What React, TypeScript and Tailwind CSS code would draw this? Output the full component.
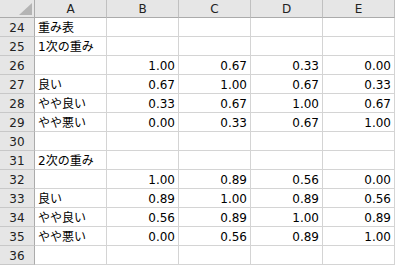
import React from "react";

const rows: { n: number; a: string; v: string[] }[] = [
  { n: 24, a: "重み表", v: [] },
  { n: 25, a: "1次の重み", v: [] },
  { n: 26, a: "", v: ["1.00", "0.67", "0.33", "0.00"] },
  { n: 27, a: "良い", v: ["0.67", "1.00", "0.67", "0.33"] },
  { n: 28, a: "やや良い", v: ["0.33", "0.67", "1.00", "0.67"] },
  { n: 29, a: "やや悪い", v: ["0.00", "0.33", "0.67", "1.00"] },
  { n: 30, a: "", v: [] },
  { n: 31, a: "2次の重み", v: [] },
  { n: 32, a: "", v: ["1.00", "0.89", "0.56", "0.00"] },
  { n: 33, a: "良い", v: ["0.89", "1.00", "0.89", "0.56"] },
  { n: 34, a: "やや良い", v: ["0.56", "0.89", "1.00", "0.89"] },
  { n: 35, a: "やや悪い", v: ["0.00", "0.56", "0.89", "1.00"] },
  { n: 36, a: "", v: [] },
];

const cols = ["A", "B", "C", "D", "E"];

export default function App() {
  return (
    <div
      className="w-[395px] h-[265px] overflow-hidden bg-white text-black"
      style={{ fontFamily: '"DejaVu Sans", "Noto Sans CJK JP", sans-serif' }}
    >
      <div className="grid grid-cols-[35px_repeat(5,72px)]">
        <div className="h-[18px] bg-[#e6e6e6] border-r border-b border-[#ababab] flex items-end justify-end pr-[2px] pb-[2px]">
          <svg width="13" height="12" viewBox="0 0 13 12">
            <polygon points="13,0 13,12 0,12" fill="#b4b4b4" />
          </svg>
        </div>
        {cols.map((c) => (
          <div
            key={c}
            className="h-[18px] bg-[#e6e6e6] border-r border-r-[#c0c0c0] border-b border-b-[#ababab] flex items-center justify-center text-[12px] text-[#222] leading-none"
          >
            {c}
          </div>
        ))}
        {rows.map((r) => (
          <React.Fragment key={r.n}>
            <div className="h-[19px] bg-[#e6e6e6] border-r border-r-[#ababab] border-b border-b-[#c8c8c8] flex items-center justify-center text-[12px] text-[#222] leading-none pt-[1px]">
              {r.n}
            </div>
            <div className="h-[19px] border-r border-b border-[#d4d4d4] flex items-center pl-[3px] text-[12px] leading-none whitespace-nowrap pt-[1px]">
              {r.a}
            </div>
            {[0, 1, 2, 3].map((i) => (
              <div
                key={i}
                className="h-[19px] border-r border-b border-[#d4d4d4] flex items-center justify-end pr-[3px] text-[12px] leading-none pt-[1px]"
              >
                {r.v[i] ?? ""}
              </div>
            ))}
          </React.Fragment>
        ))}
      </div>
    </div>
  );
}
